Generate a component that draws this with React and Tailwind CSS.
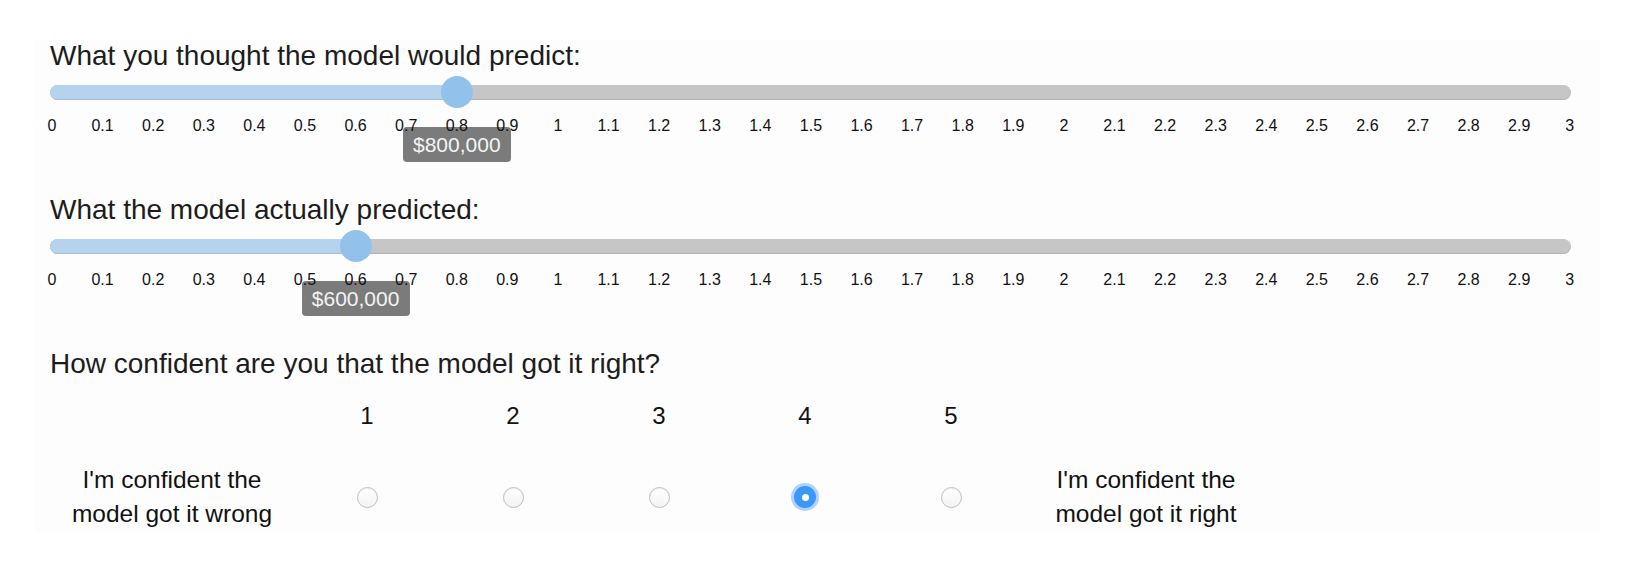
import React from "react";

const TICKS = Array.from({ length: 31 }, (_, i) => {
  const v = i / 10;
  return Number.isInteger(v) ? String(v) : v.toFixed(1);
});

const SPAN = 1518;

function Slider({ title, value, money }) {
  const center = 2 + (value / 3) * SPAN;
  return (
    <div className="h-[154px] pt-[2px]">
      <div className="text-[28px] leading-[28px] text-[#1c1c1c]">{title}</div>
      <div className="relative w-[1521px] h-[32px] mt-[6px] flex items-center">
        <div className="relative w-full h-[15px] rounded-full bg-[#c6c6c6] overflow-hidden shadow-[inset_0_-1px_1px_rgba(0,0,0,0.10)]">
          <div
            className="h-full bg-[#b5d3ee] shadow-[inset_0_-1px_1px_rgba(0,0,0,0.10)]"
            style={{ width: center }}
          />
        </div>
        <div
          className="absolute top-0 w-[32px] h-[32px] rounded-full bg-[#92c2ec]"
          style={{ left: center - 16 }}
        />
        <div
          className="absolute top-[51px] w-[108px] h-[35px] rounded-[4px] bg-[#7b7b7b] flex items-center justify-center text-[21px] leading-[21px] text-[#f4f4f4]"
          style={{ left: center - 54 }}
        >
          {money}
        </div>
      </div>
      <div className="relative z-10 -ml-[23px] w-[1568px] mt-[10px] flex justify-between">
        {TICKS.map((t) => (
          <span
            key={t}
            className="w-[50px] text-center text-[16px] leading-[15px] text-[#111]"
          >
            {t}
          </span>
        ))}
      </div>
    </div>
  );
}

function Radio({ checked }) {
  if (checked) {
    return (
      <span className="w-[22px] h-[22px] rounded-full bg-[#3b97fa] shadow-[0_0_0_3px_rgba(80,160,250,0.45)] flex items-center justify-center">
        <span className="w-[7px] h-[7px] rounded-full bg-white" />
      </span>
    );
  }
  return (
    <span className="w-[21px] h-[21px] rounded-full border border-[#bdbdbd] bg-gradient-to-b from-white to-[#f3f3f3] shadow-[inset_0_1px_1px_rgba(0,0,0,0.06)]" />
  );
}

export default function App() {
  return (
    <div className="min-h-[566px] w-[1635px] bg-white pt-[40px] pl-[35px] font-['Liberation_Sans',Arial,sans-serif]">
      <div className="w-[1565px] h-[493px] bg-[#fdfdfd] pl-[15px]">
        <Slider
          title="What you thought the model would predict:"
          value={0.8}
          money="$800,000"
        />
        <Slider
          title="What the model actually predicted:"
          value={0.6}
          money="$600,000"
        />
        <div className="pt-[2px]">
          <div className="text-[28px] leading-[28px] text-[#1c1c1c]">
            How confident are you that the model got it right?
          </div>
          <div className="mt-[26px] grid grid-cols-[244px_146px_146px_146px_146px_146px_244px] gap-y-[35px] items-center">
            <div />
            {[1, 2, 3, 4, 5].map((n) => (
              <div
                key={n}
                className="text-center text-[24px] leading-[24px] text-[#111]"
              >
                {n}
              </div>
            ))}
            <div />
            <div className="text-center text-[24.5px] leading-[34px] text-[#111]">
              I'm confident the
              <br />
              model got it wrong
            </div>
            {[1, 2, 3, 4, 5].map((n) => (
              <div key={n} className="flex justify-center">
                <Radio checked={n === 4} />
              </div>
            ))}
            <div className="text-center text-[24.5px] leading-[34px] text-[#111]">
              I'm confident the
              <br />
              model got it right
            </div>
          </div>
        </div>
      </div>
    </div>
  );
}
